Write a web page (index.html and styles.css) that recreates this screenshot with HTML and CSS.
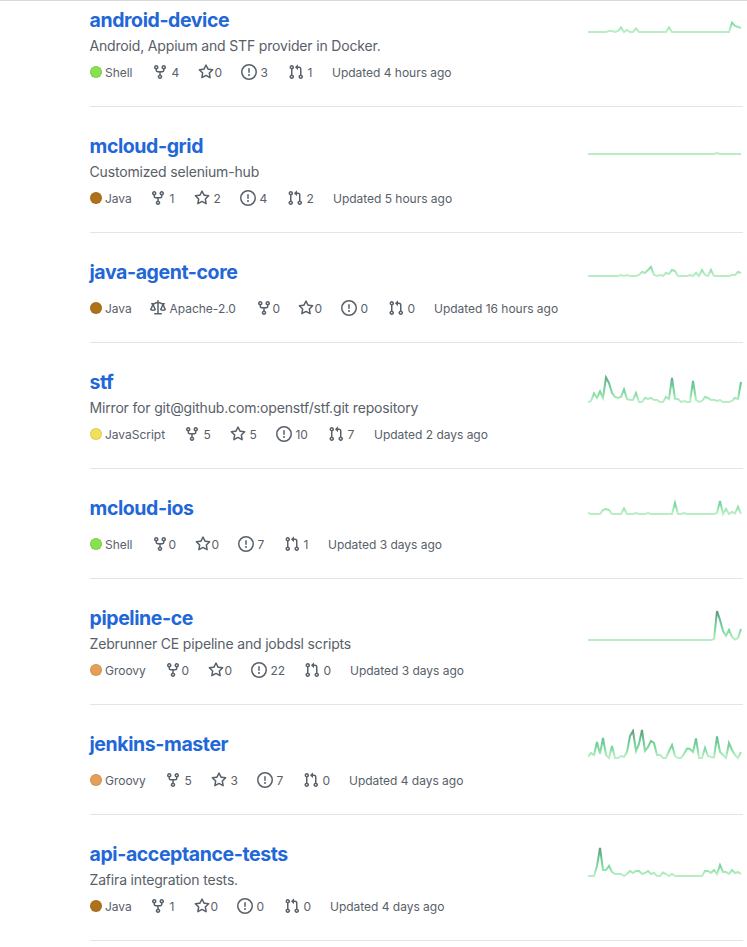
FILE: index.html
```html
<!DOCTYPE html>
<html lang="en">
<head>
<meta charset="utf-8">
<title>Repositories</title>
<link rel="stylesheet" href="styles.css">
</head>
<body>
<svg class="defs" width="0" height="0" aria-hidden="true">
  <symbol id="fork" viewBox="0 0 16 16"><path fill-rule="evenodd" d="M5 3.25a.75.75 0 11-1.5 0 .75.75 0 011.5 0zm0 2.122a2.25 2.25 0 10-1.5 0v.878A2.25 2.25 0 005.75 8.5h1.5v2.128a2.251 2.251 0 101.5 0V8.5h1.5a2.25 2.25 0 002.25-2.25v-.878a2.25 2.25 0 10-1.5 0v.878a.75.75 0 01-.75.75h-4.5A.75.75 0 015 6.25v-.878zm3.75 7.378a.75.75 0 11-1.5 0 .75.75 0 011.5 0zm3-8.75a.75.75 0 100-1.5.75.75 0 000 1.5z"/></symbol>
  <symbol id="star" viewBox="0 0 16 16"><path fill-rule="evenodd" d="M8 .25a.75.75 0 01.673.418l1.882 3.815 4.21.612a.75.75 0 01.416 1.279l-3.046 2.97.719 4.192a.75.75 0 01-1.088.791L8 12.347l-3.766 1.98a.75.75 0 01-1.088-.79l.72-4.194L.818 6.374a.75.75 0 01.416-1.28l4.21-.611L7.327.668A.75.75 0 018 .25zm0 2.445L6.615 5.5a.75.75 0 01-.564.41l-3.097.45 2.24 2.184a.75.75 0 01.216.664l-.528 3.084 2.769-1.456a.75.75 0 01.698 0l2.77 1.456-.53-3.084a.75.75 0 01.216-.664l2.24-2.183-3.096-.45a.75.75 0 01-.564-.41L8 2.694v.001z"/></symbol>
  <symbol id="issue" viewBox="0 0 16 16"><path fill-rule="evenodd" d="M8 1.5a6.5 6.5 0 100 13 6.5 6.5 0 000-13zM0 8a8 8 0 1116 0A8 8 0 010 8zm9 3a1 1 0 11-2 0 1 1 0 012 0zm-.25-6.25a.75.75 0 00-1.5 0v3.5a.75.75 0 001.5 0v-3.5z"/></symbol>
  <symbol id="pull" viewBox="0 0 16 16"><path fill-rule="evenodd" d="M7.177 3.073L9.573.677A.25.25 0 0110 .854v4.792a.25.25 0 01-.427.177L7.177 3.427a.25.25 0 010-.354zM3.75 2.5a.75.75 0 100 1.5.75.75 0 000-1.5zm-2.25.75a2.25 2.25 0 113 2.122v5.256a2.251 2.251 0 11-1.5 0V5.372A2.25 2.25 0 011.5 3.25zM11 2.5h-1V4h1a1 1 0 011 1v5.628a2.251 2.251 0 101.5 0V5A2.5 2.5 0 0011 2.5zm1 10.25a.75.75 0 111.5 0 .75.75 0 01-1.5 0zM3.75 12a.75.75 0 100 1.5.75.75 0 000-1.5z"/></symbol>
  <symbol id="law" viewBox="0 0 16 16"><path fill-rule="evenodd" d="M8.75.75a.75.75 0 00-1.5 0V2h-.984c-.305 0-.604.08-.869.23l-1.288.737A.25.25 0 013.984 3H1.75a.75.75 0 000 1.5h.428L.066 9.192a.75.75 0 00.154.838l.53-.53-.53.53v.001l.002.002.002.002.006.006.016.015.045.04a3.514 3.514 0 00.686.45A4.492 4.492 0 003 11c.88 0 1.556-.22 2.023-.454a3.515 3.515 0 00.686-.45l.045-.04.016-.015.006-.006.002-.002.001-.002L5.25 9.5l.53.53a.75.75 0 00.154-.838L3.822 4.5h.162c.305 0 .604-.08.869-.23l1.289-.737a.25.25 0 01.124-.033h.984V13h-2.5a.75.75 0 000 1.5h6.5a.75.75 0 000-1.5h-2.5V3.5h.984a.25.25 0 01.124.033l1.29.736c.264.152.563.231.868.231h.162l-2.112 4.692a.75.75 0 00.154.838l.53-.53-.53.53v.001l.002.002.002.002.006.006.016.015.045.04a3.517 3.517 0 00.686.45A4.492 4.492 0 0013 11c.88 0 1.556-.22 2.023-.454a3.512 3.512 0 00.686-.45l.045-.04.01-.01.006-.005.006-.006.002-.002.001-.002-.529-.531.53.53a.75.75 0 00.154-.838L13.823 4.5h.427a.75.75 0 000-1.5h-2.234a.25.25 0 01-.124-.033l-1.29-.736A1.75 1.75 0 009.735 2H8.75V.75zM1.695 9.227c.285.135.718.273 1.305.273s1.02-.138 1.305-.273L3 6.327l-1.305 2.9zm10 0c.285.135.718.273 1.305.273s1.02-.138 1.305-.273L13 6.327l-1.305 2.9z"/></symbol>
</svg>
<ul class="repos" id="repos"></ul>
<script src="repos.js"></script>
</body>
</html>
```
FILE: styles.css
```css
* { box-sizing: border-box; }
body {
  margin: 0;
  border-top: 1px solid #d9dadf;
  background: #fff;
  color: #586069;
  font-family: Inter, "Liberation Sans", sans-serif;
}
.defs { position: absolute; }
.repos {
  list-style: none;
  margin: 0 4px 0 90px;
  padding: 0;
}
.repo {
  display: flex;
  justify-content: space-between;
  padding: 24px 0 25px;
  border-bottom: 1px solid #e1e4e8;
}
.repo:first-child { padding-top: 4px; }
.name {
  margin: 0 0 0 -0.5px;
  font-size: 19.5px;
  line-height: 30px;
  font-weight: 650;
  letter-spacing: -0.41px;
}
.name a { color: #2267d8; text-decoration: none; }
.desc {
  margin: 0 0 0 -0.5px;
  font-size: 14px;
  line-height: 22px;
  letter-spacing: -0.17px;
  white-space: nowrap;
}
.meta {
  display: grid;
  align-items: center;
  height: 18px;
  margin-top: 12px;
  font-size: 12px;
  line-height: 16px;
  white-space: nowrap;
}
.desc + .meta { margin-top: 6px; }
.item { display: flex; align-items: center; gap: 3.5px; }
.item.tight { gap: 0.5px; }
.text { padding-top: 2px; letter-spacing: -0.02px; }
.icon { width: 16px; height: 16px; flex: none; fill: #586069; }
.dot { width: 12px; height: 12px; border-radius: 50%; border: 1px solid rgba(27, 31, 35, 0.1); }
.lang { gap: 3px; }
.Shell { background: #89e051; }
.Java { background: #b07219; }
.JavaScript { background: #f1e05a; }
.Groovy { background: #e69f56; }
.spark { width: 155px; height: 40px; flex: none; }
.spark polyline { fill: none; stroke-width: 2; }
```
FILE: repos.js
```js
const z = n => Array(n).fill(0);

// cols: left edge of each metadata entry; base: baseline of the activity graph
const repos = [
  { name: 'android-device', desc: 'Android, Appium and STF provider in Docker.', lang: 'Shell', n: [4, 0, 3, 1], when: '4 hours', cols: [152, 198, 241, 288, 332], base: 27,
    data: [...z(7), 1, 1, 0, 1, 4.5, 0, 2, 0, 0, 3.5, ...z(10), 4.5, ...z(20), 9.3, 6, 5, 4] },
  { name: 'mcloud-grid', desc: 'Customized selenium-hub', lang: 'Java', n: [1, 2, 4, 2], when: '5 hours', cols: [150, 194, 240, 287, 333], base: 23,
    data: [...z(43), 1, ...z(8)] },
  { name: 'java-agent-core', lang: 'Java', license: 'Apache-2.0', n: [0, 0, 0, 0], when: '16 hours', cols: [150, 256, 298, 341, 388, 434], base: 19,
    data: [...z(11), 1, 0, 1, 0, 0, 0, 1, 4, 3, 6, 9, 1, 0, 1, 0, 3, 2, 6, 5, 0, 0, 0, 0, 1, 0, 3, 0, 6, 1, 0, 6, ...z(6), 1, 1, 4, 3] },
  { name: 'stf', desc: 'Mirror for git@github.com:openstf/stf.git repository', lang: 'JavaScript', n: [5, 5, 10, 7], when: '2 days', cols: [184, 230, 276, 328, 374], base: 35,
    data: [0, 1, 8.5, 4, 10.5, 4, 24.5, 19, 9, 5, 4, 5, 12.5, 3, 2, 2, 9, 0, 0, 4, 3, 4, 2, 2, 0, 0, 5, 3, 24, 3, 3, 0, 1, 0, 0, 21, 2, 0, 1, 5, 4, 2, 2, 1, 2, 0, 0, 0, 1, 4, 3, 20] },
  { name: 'mcloud-ios', lang: 'Shell', n: [0, 0, 7, 1], when: '3 days', cols: [152, 195, 238, 284, 328], base: 21,
    data: [1, 0, 0, 0, 0, 4, 5, 4, 0, 0, 0, 0, 5.5, 0, 0, 0, 1, 0, 0, 0, 1, ...z(8), 11, 0, 0, 1, ...z(10), 1, 13, 0, 5, 0, 2, 0.5, 7, 0] },
  { name: 'pipeline-ce', desc: 'Zebrunner CE pipeline and jobdsl scripts', lang: 'Groovy', n: [0, 0, 22, 0], when: '3 days', cols: [165, 208, 251, 304, 350], base: 37,
    data: [...z(42), 1, 29, 20, 9, 4, 10, 3, 0.5, 2, 11] },
  { name: 'jenkins-master', lang: 'Groovy', n: [5, 3, 7, 0], when: '4 days', cols: [165, 211, 257, 303, 349], base: 29,
    data: [1, 5, 3, 16, 4, 20, 3, 0, 12, 0, 0, 2, 1, 6, 22, 27, 7, 14, 28, 7, 11, 17, 15, 3, 3, 0, 0, 7, 13, 2, 0, 0, 4, 9.5, 9, 6, 19.5, 0, 0, 10, 2, 1, 0.5, 21.5, 6, 3, 0, 15, 8, 3, 0, 6] },
  { name: 'api-acceptance-tests', desc: 'Zafira integration tests.', lang: 'Java', n: [1, 0, 0, 0], when: '4 days', cols: [150, 194, 237, 284, 330], base: 37,
    data: [0, 0, 0, 10, 28, 6, 6, 10, 4, 2, 2, 2, 0, 2, 5, 3, 5, 5, 2, 3, 5, 2, 3, 0, 0, 3.5, 2, 0, 2, ...z(10), 5, 5, 3, 6, 2, 11, 4, 4, 2, 6, 3, 4, 2] }
];

const icons = ['fork', 'star', 'issue', 'pull'];
const item = (icon, text, tight) =>
  `<span class="item${tight ? ' tight' : ''}"><svg class="icon"><use href="#${icon}"/></svg><span class="text">${text}</span></span>`;

document.getElementById('repos').innerHTML = repos.map((r, i) => {
  const widths = r.cols.map((c, k) => c - (k ? r.cols[k - 1] : 90) + 'px').join(' ');
  const points = r.data.map((v, k) => `${k * 3},${r.base - v}`).join(' ');
  return `<li class="repo">
    <div>
      <h3 class="name"><a href="#">${r.name}</a></h3>
      ${r.desc ? `<p class="desc">${r.desc}</p>` : ''}
      <div class="meta" style="grid-template-columns:${widths} auto">
        <span class="item lang"><span class="dot ${r.lang}"></span><span class="text">${r.lang}</span></span>
        ${r.license ? item('law', r.license) : ''}
        ${icons.map((ic, k) => item(ic, r.n[k], k < 2 && r.n[k] === 0)).join('')}
        <span class="text">Updated ${r.when} ago</span>
      </div>
    </div>
    <svg class="spark">
      <linearGradient id="g${i}" gradientUnits="userSpaceOnUse" x1="0" x2="0" y1="${r.base}" y2="${r.base - 28}">
        <stop offset="0.04" stop-color="#b9eec4"/><stop offset="0.33" stop-color="#7fdaa1"/>
        <stop offset="0.66" stop-color="#6bc594"/><stop offset="1" stop-color="#68987f"/>
      </linearGradient>
      <polyline points="${points}" stroke="url(#g${i})"/>
    </svg>
  </li>`;
}).join('');
```
